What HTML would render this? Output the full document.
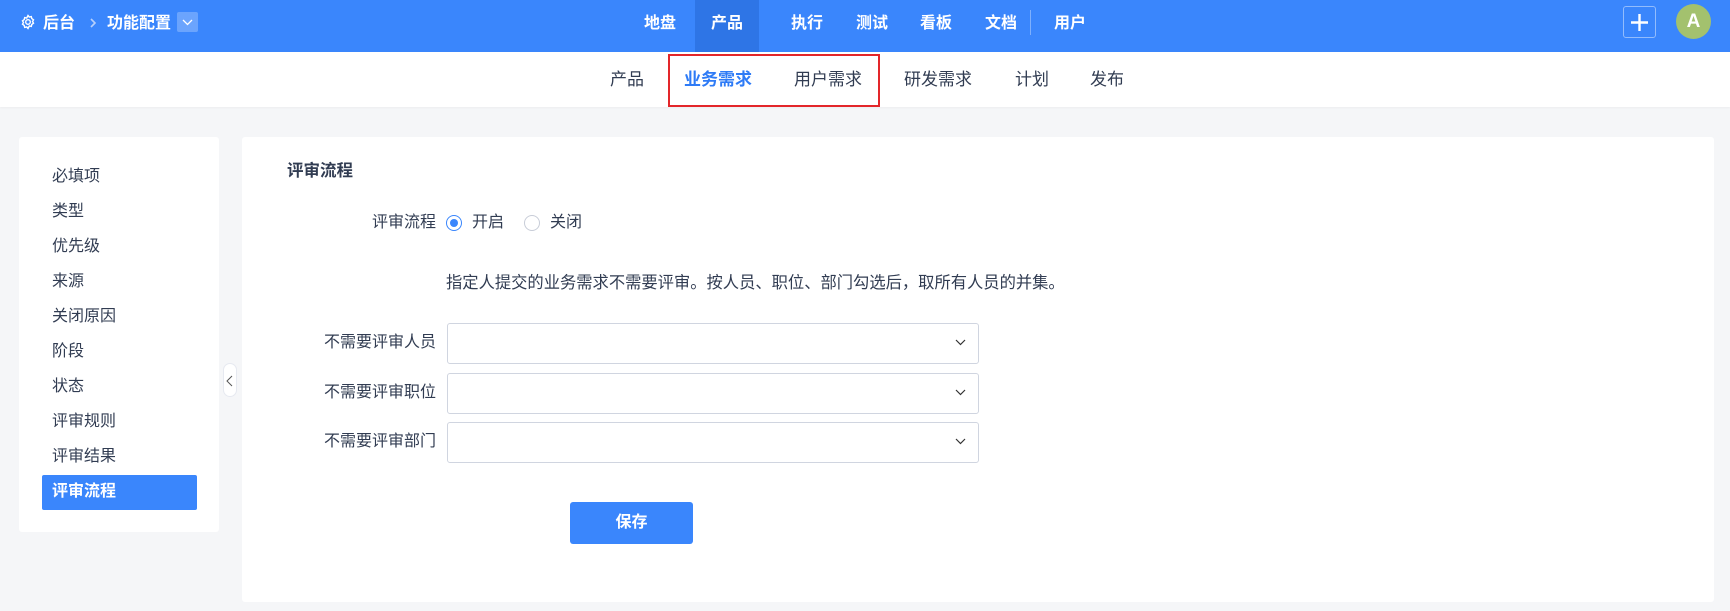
<!DOCTYPE html>
<html><head><meta charset="utf-8">
<style>
*{margin:0;padding:0;box-sizing:border-box}
body{width:1730px;height:611px;background:#f5f6f8;font-family:"Liberation Sans","Noto Sans CJK SC",sans-serif;color:#313c52;position:relative;overflow:hidden;font-size:16px}
.abs{position:absolute}
.hdr{left:0;top:0;width:1730px;height:52px;background:#3a86fc;color:#fff}
.hdr .t{position:absolute;top:0;line-height:48px;font-weight:bold;font-size:16px;white-space:nowrap}
.sub{left:0;top:52px;width:1730px;height:55px;background:#fff;box-shadow:0 1px 2px rgba(0,0,0,.04)}
.sub .t{position:absolute;top:0;line-height:55px;font-size:17px;color:#313c52;white-space:nowrap}
.panel{background:#fff;border-radius:3px}
.mi{position:absolute;left:52px;font-size:16px;line-height:20px;color:#313c52}
.lbl{position:absolute;right:calc(1730px - 436px);text-align:right;white-space:nowrap;line-height:20px}
.sel{position:absolute;left:447px;width:532px;height:41px;border:1px solid #d0d5e0;border-radius:3px;background:#fff}
.sel svg{position:absolute;right:12px;top:15px}
</style></head><body>
<div class="abs hdr">
  <svg class="abs" style="left:20px;top:14px" width="16" height="16" viewBox="0 0 16 16" fill="none" stroke="#fff" stroke-width="1.4"><circle cx="8" cy="8" r="2.3"/><path d="M8 1.5l1.3 1.6 2-.5.5 2 1.7 1.2-1 1.7 1 1.7-1.7 1.2-.5 2-2-.5L8 14.5l-1.3-1.6-2 .5-.5-2-1.7-1.2 1-1.7-1-1.7 1.7-1.2.5-2 2 .5z"/></svg>
  <div class="t" style="left:43px">后台</div>
  <svg class="abs" style="left:89px;top:17px" width="8" height="12" viewBox="0 0 8 12" fill="none" stroke="#b7d0fb" stroke-width="1.6"><path d="M2 2l4 4-4 4"/></svg>
  <div class="t" style="left:107px">功能配置</div>
  <div class="abs" style="left:177px;top:12px;width:21px;height:20px;background:rgba(255,255,255,.25);border-radius:2px"><svg style="position:absolute;left:5px;top:7px" width="11" height="7" viewBox="0 0 11 7" fill="none" stroke="#fff" stroke-width="1.3"><path d="M1 1l4.5 4.5L10 1"/></svg></div>
  <div class="t" style="left:644px">地盘</div>
  <div class="abs" style="left:695px;top:0;width:64px;height:52px;background:#2e75e6"></div>
  <div class="t" style="left:711px">产品</div>
  <div class="t" style="left:791px">执行</div>
  <div class="t" style="left:856px">测试</div>
  <div class="t" style="left:920px">看板</div>
  <div class="t" style="left:985px">文档</div>
  <div class="abs" style="left:1030px;top:10px;width:1px;height:25px;background:rgba(255,255,255,.35)"></div>
  <div class="t" style="left:1054px">用户</div>
  <div class="abs" style="left:1623px;top:6px;width:33px;height:32px;border:1px solid rgba(255,255,255,.45);border-radius:3px"><svg style="position:absolute;left:6px;top:6px" width="19" height="19" viewBox="0 0 19 19" stroke="#fff" stroke-width="2.4"><path d="M9.5 1v17M1 9.5h17"/></svg></div>
  <div class="abs" style="left:1676px;top:4px;width:35px;height:35px;border-radius:50%;background:#a3c16e;color:#fff;text-align:center;line-height:35px;font-size:19px;font-weight:bold">A</div>
</div>
<div class="abs sub">
  <div class="t" style="left:610px">产品</div>
  <div class="t" style="left:684px;color:#2e7bf6;font-weight:bold">业务需求</div>
  <div class="t" style="left:794px">用户需求</div>
  <div class="t" style="left:904px">研发需求</div>
  <div class="t" style="left:1015px">计划</div>
  <div class="t" style="left:1090px">发布</div>
  <div class="abs" style="left:668px;top:2px;width:212px;height:53px;border:2px solid #e3262a"></div>
</div>

<div class="abs panel" style="left:19px;top:137px;width:200px;height:395px"></div>
<div class="mi" style="top:167px">必填项</div>
<div class="mi" style="top:202px">类型</div>
<div class="mi" style="top:237px">优先级</div>
<div class="mi" style="top:272px">来源</div>
<div class="mi" style="top:307px">关闭原因</div>
<div class="mi" style="top:342px">阶段</div>
<div class="mi" style="top:377px">状态</div>
<div class="mi" style="top:412px">评审规则</div>
<div class="mi" style="top:447px">评审结果</div>
<div class="abs" style="left:42px;top:475px;width:155px;height:35px;background:#3a86fc;border-radius:2px"></div>
<div class="mi" style="top:482px;color:#fff;font-weight:bold">评审流程</div>
<div class="abs" style="left:223px;top:363px;width:14px;height:34px;background:#fff;border:1px solid #e6e9f0;border-radius:7px"><svg style="position:absolute;left:2px;top:11px" width="8" height="12" viewBox="0 0 8 12" fill="none" stroke="#555" stroke-width="1"><path d="M6 1L1 6l5 5"/></svg></div>

<div class="abs panel" style="left:242px;top:137px;width:1472px;height:465px"></div>
<div class="abs" style="left:287px;top:161px;font-weight:bold;font-size:16.5px;line-height:20px">评审流程</div>
<div class="lbl" style="top:213px">评审流程</div>
<div class="abs" style="left:446px;top:215px;width:16px;height:16px;border-radius:50%;border:1px solid #3a86fc"><div style="position:absolute;left:3px;top:3px;width:8px;height:8px;border-radius:50%;background:#3a86fc"></div></div>
<div class="abs" style="left:472px;top:213px;line-height:20px">开启</div>
<div class="abs" style="left:524px;top:215px;width:16px;height:16px;border-radius:50%;border:1px solid #c8cdd8"></div>
<div class="abs" style="left:550px;top:213px;line-height:20px">关闭</div>
<div class="abs" style="left:446px;top:273px;line-height:20px;white-space:nowrap;font-size:16.3px">指定人提交的业务需求不需要评审。按人员、职位、部门勾选后，取所有人员的并集。</div>
<div class="lbl" style="top:333px">不需要评审人员</div>
<div class="sel" style="top:323px"><svg width="11" height="7" viewBox="0 0 11 7" fill="none" stroke="#333" stroke-width="1.2"><path d="M1 1l4.5 4.5L10 1"/></svg></div>
<div class="lbl" style="top:383px">不需要评审职位</div>
<div class="sel" style="top:373px"><svg width="11" height="7" viewBox="0 0 11 7" fill="none" stroke="#333" stroke-width="1.2"><path d="M1 1l4.5 4.5L10 1"/></svg></div>
<div class="lbl" style="top:432px">不需要评审部门</div>
<div class="sel" style="top:422px"><svg width="11" height="7" viewBox="0 0 11 7" fill="none" stroke="#333" stroke-width="1.2"><path d="M1 1l4.5 4.5L10 1"/></svg></div>
<div class="abs" style="left:570px;top:502px;width:123px;height:42px;background:#3a86fc;border-radius:3px;color:#fff;font-weight:bold;text-align:center;line-height:42px">保存</div>
</body></html>
